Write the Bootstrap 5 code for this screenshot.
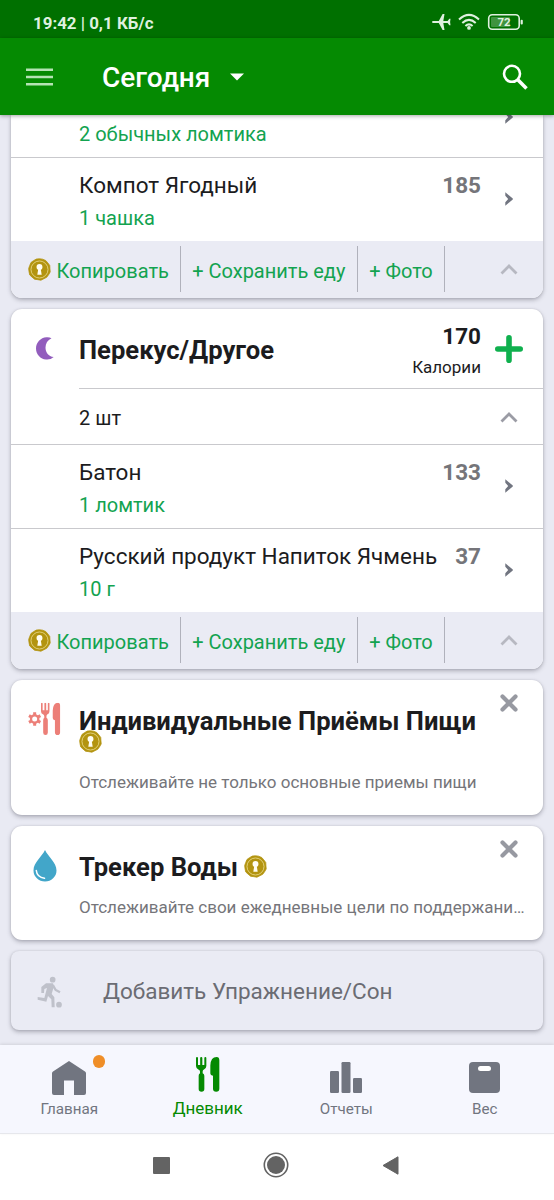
<!DOCTYPE html>
<html lang="ru">
<head>
<meta charset="utf-8">
<meta name="viewport" content="width=device-width, initial-scale=1">
<title>Дневник питания</title>
<link href="https://cdn.jsdelivr.net/npm/bootstrap@5.3.0/dist/css/bootstrap.min.css" rel="stylesheet">
<style>
  body { font-family: Roboto, "Noto Sans", sans-serif; background: #e9eaf3; color: #1c1c1e; width: 554px; height: 1200px; overflow: hidden; }
  svg { display: block; flex: none; }
  .statusbar { height: 38px; background: #007000; color: #dff0df; font-size: 16.9px; line-height: 20px; padding: 13px 30px 0 33px; font-weight: 700; }
  .status-icons { margin-top: -2px; }
  .appbar { height: 77px; background: #058a02; color: #fff; padding: 0 26px; box-shadow: 0 1px 4px rgba(0,0,0,.35); z-index: 2; }
  .appbar h1 { font-size: 28px; font-weight: 500; line-height: 34px; margin: 2px 20px 0 49px; }
  .feed { height: 930px; padding: 0 11px; gap: 11px; }
  .meal { border: 0; border-radius: 11px; background: #fff; box-shadow: 0 2px 4px rgba(60,60,75,.35), 0 0 2px rgba(60,60,75,.15); flex: none; color: inherit; }
  .meal-cut { border-radius: 0 0 11px 11px; }
  .food { height: 84px; padding: 14px 0 0 68px; border-top: 1px solid #c9c9cd; }
  .food-cut { height: 42px; padding-top: 7px; border: 0; overflow: hidden; }
  .food-cut .next-icon { margin: -12px 0 0 10px; }
  .food-name { font-size: 22.5px; line-height: 26px; }
  .food-size { font-size: 20px; line-height: 24px; color: #13a350; margin-top: 8px; }
  .food-cut .food-size { margin-top: 0; }
  .kcal { font-size: 22.5px; line-height: 26px; font-weight: 700; color: #75757a; }
  .side { width: 62px; padding-left: 14px; }
  .side-icon { width: 28px; padding-top: 20px; }
  .actions { height: 57px; background: #eaebf4; border-radius: 0 0 11px 11px; padding: 5px 0 6px; }
  .act { font-size: 20px; line-height: 45px; color: #13a350; border-right: 1px solid #b0b1bb; white-space: nowrap; padding-top: 3px; padding-left: 11.2px; }
  .act-copy { width: 170px; padding-left: 17px; gap: 5.5px; }
  .act-copy svg { margin-top: 9px; }
  .act-save { width: 177px; }
  .act-photo { width: 87px; }
  .fold { margin-right: 25px; color: #b7b8c1; }
  .summary .fold { color: #9b9ca5; }
  .meal-head { height: 79px; padding-top: 14px; }
  .meal-head .meal-title { margin-top: 12px; }
  .meal-head .kcal { color: #1c1c1e; }
  .kcal-label { font-size: 17px; line-height: 20px; margin-top: 8px; }
  .moon { margin: 14px 0 0 25px; }
  .plus { margin-top: 12px; }
  .meal-title { font-size: 25.6px; line-height: 30px; font-weight: 700; margin: 0; white-space: nowrap; }
  .ico { width: 68px; flex: none; }
  .summary { height: 55px; padding-left: 68px; font-size: 20px; }
  .summary span { margin-top: 3px; }
  .hair { border-top: 1px solid #c9c9cd; margin-left: 68px; }
  .promo-text { font-size: 17px; line-height: 20px; color: #75757a; }
  .promo-meals { height: 135px; padding-top: 26px; }
  .promo-meals .ico svg { margin: -4px 0 0 17px; }
  .promo-meals .seal-below { margin: -6px 0 19px; }
  .promo-water { height: 114px; padding-top: 26px; }
  .promo-water .ico svg { margin: -2px 0 0 22px; }
  .promo-water .promo-text { margin-top: 15px; width: 460px; }
  .seal-after { margin: 3px 0 0 6.5px; }
  .close-icon { right: 25px; top: 14px; }
  .addrow { height: 79px; background: #eaebf4; border-radius: 8px; font-size: 22.5px; color: #6b6c73; padding: 2px 0 0 26px; gap: 40px; }
  .addrow span { margin-top: 1px; }
  .tabs { height: 89px; background: #f6f7fe; border-bottom: 1px solid #e6e7ec; box-shadow: 0 -1px 3px rgba(0,0,0,.1); z-index: 2; }
  .tab { width: 138.5px; font-size: 15.2px; line-height: 18px; color: #717580; }
  .tab-icon { height: 42px; margin: 10px 0 3px; padding-top: 7px; }
  .tab-icon.tall { padding-top: 6px; }
  .tab.on .tab-icon { padding-top: 2px; margin-bottom: 2px; }
  .tab.on { color: #058a02; font-size: 17px; }
  .dot { position: absolute; left: 92.5px; top: 10px; width: 12.5px; height: 12.5px; border-radius: 50%; background: #ef8e28; }
  .sysbar { height: 66px; background: #fff; padding: 0 155px 4px 153px; }
</style>
</head>
<body class="d-flex flex-column">
<svg width="0" height="0" class="position-absolute">
  <defs>
    <symbol id="seal" viewBox="0 0 24 24">
      <path d="M12 .8 15.200 1.200 18.500 2.600 20.600 5 22.700 7.800 22.900 11.200 23.200 14.500 21.500 17.500 19.500 20.200 16.600 21.600 13.500 23.200 10.200 22.600 6.900 22.200 4.300 20 1.800 17.700 1.100 14.500 .7 11 1.800 7.800 3.100 4.700 5.700 2.800 8.700 1.100Z" fill="#b39410" stroke="#b39410" stroke-width=".8" stroke-linejoin="round"/>
      <circle cx="12" cy="12" r="8.900" fill="none" stroke="#e3d27c" stroke-width="1"/>
      <circle cx="12" cy="9.300" r="3.100" fill="#fffdf2"/><path d="M10.800 11h2.400l1.100 6.400H9.700z" fill="#fffdf2"/>
    </symbol>
    <symbol id="cutlery" viewBox="0 0 72 104" preserveAspectRatio="none">
      <path d="M0 3Q0 0 3 0T6 3V24H12.500V3Q12.500 0 15.700 0T19 3V24H25V3Q25 0 28 0T31 3V27Q31 34 24 37Q20 39 20 43V48Q25 50 25 56V95Q25 103 16.500 103T8 95V56Q8 50 12 48V43Q12 39 7 37Q0 34 0 27Z"/>
      <path d="M70 10V94Q70 103 60.500 103T51 94V56Q43 55 43 49V25Q44 0 62 0Q70 0 70 10Z"/>
    </symbol>
    <symbol id="next" viewBox="0 0 8 14"><path d="M.3 .2 7.800 6.600V7.400L.3 13.800V10.200L3.200 7 .3 3.800Z" fill="#717580"/></symbol>
    <symbol id="up" viewBox="0 0 18 12"><path d="M1.500 10.500 9 3l7.500 7.500" fill="none" stroke="currentColor" stroke-width="2.800"/></symbol>
    <symbol id="cross" viewBox="0 0 18 18"><path d="M2.500 2.500l13 13M15.500 2.500l-13 13" fill="none" stroke="#9799a1" stroke-width="4.200" stroke-linecap="round"/></symbol>
  </defs>
</svg>

<div class="statusbar d-flex justify-content-between">
  <span>19:42 | 0,1 КБ/с</span>
  <svg class="status-icons" width="92" height="22" viewBox="0 0 92 22" fill="#dff0df">
    <path d="M.8 9.900H6.800L10.600 3H12.500L11.300 9.900 15.600 10 17.300 7.700H18.500L18.100 11 18.500 14.300H17.300L15.600 12 11.300 12.100 12.500 19H10.600L6.800 12.100H.8Q-.8 11 .8 9.900Z"/>
    <g fill="none" stroke="#dff0df" stroke-width="2"><path d="M27 8.600Q37 -.8 47 8.600"/><path d="M30.300 12Q37 5.800 43.700 12"/><path d="M33.400 15Q37 11.800 40.600 15"/></g>
    <circle cx="37" cy="16.900" r="1.900"/>
    <rect x="56.700" y="3.700" width="30.500" height="14.600" rx="3.500" fill="none" stroke="#dff0df" stroke-width="1.600"/>
    <rect x="59" y="6" width="19" height="10" rx="1" fill="#3f933f"/>
    <rect x="88.600" y="8.800" width="2.200" height="4.600" rx="1"/>
    <text x="72" y="15.200" text-anchor="middle" font-size="11.500" font-weight="700" font-family="Roboto">72</text>
  </svg>
</div>

<header class="appbar d-flex align-items-center position-relative">
  <svg width="27" height="18" viewBox="0 0 27 18" stroke="#b5e3b4" stroke-width="2.600"><path d="M0 1.800H27M0 9H27M0 16.200H27"/></svg>
  <h1>Сегодня</h1>
  <svg width="14" height="8" viewBox="0 0 14 8"><path d="M0 .5H14L7 7.500Z" fill="#fff"/></svg>
  <svg class="ms-auto" width="26" height="26" viewBox="0 0 26 26" fill="none" stroke="#fff"><circle cx="10" cy="9.800" r="8" stroke-width="2.600"/><path d="M15.800 15.800 24.500 24.500" stroke-width="3.600"/></svg>
</header>

<main class="feed d-flex flex-column overflow-hidden">
  <section class="card meal meal-cut">
    <div class="food food-cut d-flex">
      <div class="food-size flex-grow-1">2 обычных ломтика</div>
      <div class="side"><svg class="next-icon" width="8" height="14"><use href="#next"/></svg></div>
    </div>
    <div class="food d-flex">
      <div class="flex-grow-1"><div class="food-name">Компот Ягодный</div><div class="food-size">1 чашка</div></div>
      <div class="kcal">185</div>
      <div class="side"><div class="side-icon d-flex justify-content-center"><svg width="8" height="14"><use href="#next"/></svg></div></div>
    </div>
    <div class="actions d-flex">
      <div class="act act-copy d-flex"><svg width="23" height="23"><use href="#seal"/></svg>Копировать</div>
      <div class="act act-save">+ Сохранить еду</div>
      <div class="act act-photo">+ Фото</div>
      <svg class="fold ms-auto align-self-center" width="18" height="12"><use href="#up"/></svg>
    </div>
  </section>

  <section class="card meal">
    <div class="meal-head d-flex">
      <div class="ico"><svg class="moon" width="18" height="23" viewBox="0 0 18 23"><path d="M17.700 20Q14.500 23 10 22.500C4.500 22 0 17.500 0 11.500S4.500 .7 10.500 .3Q13.500 .1 15.500 1.200C11.500 3 9.500 6.500 9.500 10.500C9.500 15.500 12.500 19.500 17.700 20Z" fill="#925dbd"/></svg></div>
      <h2 class="meal-title flex-grow-1">Перекус/Другое</h2>
      <div class="text-end"><div class="kcal">170</div><div class="kcal-label">Калории</div></div>
      <div class="side"><svg class="plus" width="28" height="28" viewBox="0 0 28 28" stroke="#0fb04e" stroke-width="5.600" stroke-linecap="round"><path d="M2.800 14H25.200M14 2.800V25.200"/></svg></div>
    </div>
    <div class="hair"></div>
    <div class="summary d-flex align-items-center"><span>2 шт</span>
      <svg class="fold ms-auto" width="18" height="12"><use href="#up"/></svg></div>
    <div class="food d-flex">
      <div class="flex-grow-1"><div class="food-name">Батон</div><div class="food-size">1 ломтик</div></div>
      <div class="kcal">133</div>
      <div class="side"><div class="side-icon d-flex justify-content-center"><svg width="8" height="14"><use href="#next"/></svg></div></div>
    </div>
    <div class="food d-flex">
      <div class="flex-grow-1"><div class="food-name">Русский продукт Напиток Ячмень</div><div class="food-size">10 г</div></div>
      <div class="kcal">37</div>
      <div class="side"><div class="side-icon d-flex justify-content-center"><svg width="8" height="14"><use href="#next"/></svg></div></div>
    </div>
    <div class="actions d-flex">
      <div class="act act-copy d-flex"><svg width="23" height="23"><use href="#seal"/></svg>Копировать</div>
      <div class="act act-save">+ Сохранить еду</div>
      <div class="act act-photo">+ Фото</div>
      <svg class="fold ms-auto align-self-center" width="18" height="12"><use href="#up"/></svg>
    </div>
  </section>

  <section class="card meal promo-meals flex-row">
    <div class="ico"><svg width="33" height="34" viewBox="0 0 99 102" fill="#ec7f78"><g stroke="#ec7f78" fill="none"><circle cx="20" cy="51" r="11" stroke-width="7"/><path d="M20 31V39M20 63V71M3 41l7 4M30 57l7 4M3 61l7-4M30 45l7-4" stroke-width="9"/></g><use href="#cutlery" x="39" y="2" width="59" height="98"/></svg></div>
    <div><h2 class="meal-title">Индивидуальные Приёмы Пищи</h2>
      <svg class="seal-below" width="23" height="23"><use href="#seal"/></svg>
      <div class="promo-text">Отслеживайте не только основные приемы пищи</div></div>
    <svg class="close-icon position-absolute" width="18" height="18"><use href="#cross"/></svg>
  </section>

  <section class="card meal promo-water flex-row">
    <div class="ico"><svg width="24" height="32" viewBox="0 0 24 32"><path d="M12 0C15 6.500 23.500 12.500 23.500 20.500A11.500 11 0 0 1 .5 20.500C.5 12.500 9 6.500 12 0Z" fill="#42a6c9"/><path d="M3.300 20.500Q4 27.300 11.500 28.300" fill="none" stroke="#fff" stroke-width="1.500" stroke-linecap="round"/></svg></div>
    <div><div class="d-flex"><h2 class="meal-title">Трекер Воды</h2><svg class="seal-after" width="23" height="23"><use href="#seal"/></svg></div>
      <div class="promo-text text-nowrap">Отслеживайте свои ежедневные цели по поддержани…</div></div>
    <svg class="close-icon position-absolute" width="18" height="18"><use href="#cross"/></svg>
  </section>

  <section class="card meal addrow flex-row align-items-center">
    <svg width="26" height="32" viewBox="112 478 78 96" fill="#bfc1ca"><circle cx="159" cy="489" r="8.500"/><circle cx="178" cy="564" r="8.500"/><path d="M139 500H160L163 508 156 532 164 542 165 572H156L155 548 145 538 140 555 114 549V541L134 544 142 514 134 517 133 529H125V511Z"/><path d="M160 506 168 520 181 527" fill="none" stroke="#bfc1ca" stroke-width="7"/></svg>
    <span>Добавить Упражнение/Сон</span>
  </section>
</main>

<nav class="tabs d-flex position-relative">
  <div class="tab d-flex flex-column align-items-center position-relative">
    <div class="tab-icon tall"><svg width="34" height="34" viewBox="0 0 34 34"><path d="M17 0 33 10.500Q34 11 34 12.500V32Q34 34 32 34H22V19.500H12V34H2Q0 34 0 32V12.500Q0 11 1 10.500Z" fill="#717580"/></svg></div>
    <span>Главная</span><i class="dot"></i>
  </div>
  <div class="tab on d-flex flex-column align-items-center">
    <div class="tab-icon"><svg width="24" height="35" fill="#058a02"><use href="#cutlery"/></svg></div>
    <span>Дневник</span>
  </div>
  <div class="tab d-flex flex-column align-items-center">
    <div class="tab-icon"><svg width="32" height="31" viewBox="0 0 32 31" fill="#717580"><rect y="9" width="9" height="22" rx="1.200"/><rect x="11.500" width="9" height="31" rx="1.200"/><rect x="23" y="16" width="9" height="15" rx="1.200"/></svg></div>
    <span>Отчеты</span>
  </div>
  <div class="tab d-flex flex-column align-items-center">
    <div class="tab-icon"><svg width="31" height="31" viewBox="0 0 31 31"><rect width="31" height="31" rx="4" fill="#717580"/><rect x="9" y="4" width="13" height="5" rx="2.500" fill="#fff"/></svg></div>
    <span>Вес</span>
  </div>
</nav>

<footer class="sysbar d-flex align-items-center justify-content-between">
  <svg width="17" height="17"><rect width="17" height="17" rx="1" fill="#636363"/></svg>
  <svg width="26" height="26" viewBox="0 0 26 26"><circle cx="13" cy="13" r="11.700" fill="none" stroke="#636363" stroke-width="1.600"/><circle cx="13" cy="13" r="9" fill="#636363"/></svg>
  <svg width="17" height="19" viewBox="0 0 17 19"><path d="M16 .8V18.200L1 9.500Z" fill="#636363" stroke="#636363" stroke-linejoin="round"/></svg>
</footer>
<script src="https://cdn.jsdelivr.net/npm/bootstrap@5.3.0/dist/js/bootstrap.bundle.min.js"></script>
</body>
</html>
